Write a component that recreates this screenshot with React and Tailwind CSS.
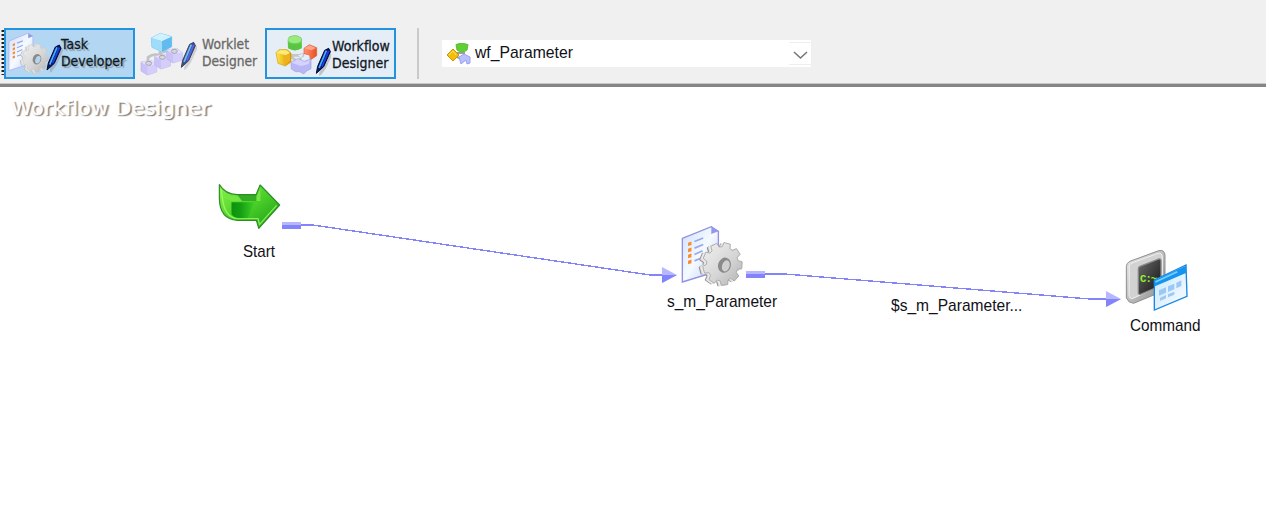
import React from 'react';

const label = 'font-["Liberation_Sans",sans-serif] text-[17px] leading-5 whitespace-nowrap text-[#111118]';
const buttonLabel = 'font-["DejaVu_Sans",sans-serif] text-[14px] leading-[17px] whitespace-nowrap origin-left [font-variant-ligatures:none] [-webkit-text-stroke:0.3px_currentColor]';

function gearPath(cx, cy, rx, ry, teeth) {
  const points = [];
  for (let i = 0; i < teeth; i++) {
    [[-0.38, 0.8], [-0.25, 1], [0.22, 1], [0.35, 0.8]].forEach(([o, r]) => {
      const a = ((i + o) / teeth) * Math.PI * 2 - 0.62;
      points.push(`${(cx + Math.cos(a) * rx * r).toFixed(1)},${(cy + Math.sin(a) * ry * r).toFixed(1)}`);
    });
  }
  return `M${points.join('L')}Z`;
}

function TaskIcon({ className, soft = false }) {
  const id = soft ? 'soft' : 'full';
  return (
    <svg className={className} viewBox="94 15 187 185" preserveAspectRatio="none">
      <defs>
        <linearGradient id={`page-${id}`} x2="1" y2="1">
          <stop stopColor="#cfe0ff" /><stop offset=".5" stopColor="#f4faff" /><stop offset="1" stopColor="#b9c7ff" />
        </linearGradient>
        <linearGradient id={`metal-${id}`} x2="1" y2="1">
          <stop stopColor="#f2f2f2" /><stop offset=".55" stopColor="#d6d6d6" /><stop offset="1" stopColor="#b2b2b2" />
        </linearGradient>
      </defs>
      <path d="M98 55L184 20L205 34V152L98 185Z" fill={`url(#page-${id})`} stroke={soft ? '#b5b5ef' : '#9292df'} strokeWidth="4" />
      <path d="M184 20V42L205 34Z" fill="#9498e8" />
      <path d="M134 64L160 54M134 84L160 73M134 103L158 92M134 122L150 115" stroke="#9ba6ed" strokeWidth="5" />
      <path d="M115 68L125 64V75L115 78ZM115 86L125 82V93L115 96ZM115 104L125 100V111L115 114ZM115 122L125 118V129L115 132Z" fill="#fb8a2b" />
      <g strokeLinejoin="round">
        <path d={gearPath(207, 134, 59, 62, 9)} fill="#b9b9b9" stroke={soft ? '#b8b8b8' : '#949494'} strokeWidth="4" />
        <path d={gearPath(210, 133, 59, 63, 9)} fill="#dedede" stroke="#dedede" strokeWidth="3" />
        <path d={gearPath(213, 132, 59, 63, 9)} fill="#ececec" stroke="#ececec" strokeWidth="3" />
        <path d={gearPath(217, 131, 59, 64, 9)} fill={`url(#metal-${id})`} stroke={soft ? '#c8c8c8' : '#a2a2a2'} strokeWidth="2.5" />
      </g>
      <ellipse cx="223" cy="135" rx="19" ry="23" fill="#8a8a8a" transform="rotate(18 223 135)" />
      <ellipse cx="227" cy="137" rx="11" ry="17" fill={soft ? '#b4d4ef' : '#d0d0d0'} transform="rotate(18 227 137)" />
    </svg>
  );
}

function Pen({ muted = false }) {
  return (
    <g opacity={muted ? 0.75 : 1}>
      <path d="M142 156L145 131L165 84L177 79L183 89L163 133L149 152Z" fill="#777" opacity=".35" transform="translate(5 5)" />
      <path d="M139 153L143 132L164 84L176 78L181 88L161 133Z" fill="#0c1687" stroke="#070729" strokeWidth="3" />
      <path d="M169 85L147 137" stroke="#43b4f3" strokeWidth="5" />
      <path d="M176 86L156 132" stroke="#1840e4" strokeWidth="5" />
      <path d="M139 153L144 136L153 141Z" fill="#071b57" />
    </g>
  );
}

function WorkletIcon() {
  const lower = [[54, 141], [95, 123], [131, 105]];
  return (
    <svg className="h-[50px] w-[62px] shrink-0" viewBox="15 24 186 150">
      <path d="M54 131V112Q72 98 89 107L91 81M94 117V92M99 97Q120 87 131 101" fill="none" stroke="#c0c3c6" strokeWidth="8" />
      {lower.map(([x, y]) => (
        <g key={x} transform={`translate(${x} ${y})`}>
          <path d="M-21 -15L10 -20L26 -7V15L-2 24L-21 12Z" fill="#c9c2f8" stroke="#b9b2ea" strokeWidth="2" />
          <path d="M-21 -15L-2 -3L26 -7L10 -20Z" fill="#e5e0fc" /><path d="M-2 -3V24L26 15V-7Z" fill="#d5cefa" />
          <ellipse cx="2" cy="-11" rx="9" ry="6" fill="#d6d6e1" stroke="#a4a4ae" strokeWidth="3" />
        </g>
      ))}
      <path d="M64 54L91 40L125 50V80L96 95L66 82Z" fill="#83cff6" stroke="#82cff6" strokeWidth="3" />
      <path d="M64 54L91 40L125 50L96 64Z" fill="#d0f1ff" />
      <path d="M64 54L96 64V95L66 82Z" fill="#9edcfa" /><path d="M96 64L125 50V80L96 95Z" fill="#61bbef" />
      <g transform="translate(15 -11)"><Pen muted /></g>
    </svg>
  );
}

function WorkflowIcon() {
  return (
    <svg className="h-[50px] w-[56px]" viewBox="45 28 168 150">
      <defs>
        <linearGradient id="gold" x2="1"><stop stopColor="#ffe84b" /><stop offset="1" stopColor="#d69200" /></linearGradient>
        <linearGradient id="coral" x2="1"><stop stopColor="#ff9271" /><stop offset="1" stopColor="#e95021" /></linearGradient>
      </defs>
      <path d="M83 104H132M84 99L113 125M121 112L119 127" stroke="#c4c7c8" strokeWidth="8" />
      <path d="M112 103L132 98L124 114Z" fill="#e9eded" stroke="#b8bdbf" strokeWidth="2" />
      <path d="M83 58Q84 45 103 44Q122 45 126 56L125 82Q106 96 84 83Z" fill="#65cf50" />
      <ellipse cx="104" cy="57" rx="20" ry="11" fill="#9be981" /><path d="M85 66Q100 77 125 67V83Q105 94 85 83Z" fill="#59c543" />
      <path d="M48 96L57 87H81L93 97V124L76 136L54 128Z" fill="url(#gold)" stroke="#d79e0a" strokeWidth="2" />
      <path d="M51 96L61 89H80L90 97L78 104Z" fill="#ffec77" /><path d="M71 105L90 99V121L73 132Z" fill="#efb11c" />
      <path d="M132 83L148 72L170 81V105L151 118L149 103L132 99Z" fill="url(#coral)" stroke="#db5b34" strokeWidth="2" />
      <path d="M133 83L149 74L168 82L154 89Z" fill="#ffa68b" />
      <path d="M93 125L113 114L133 122L153 115V144L140 151L131 160L119 153L107 153L94 145Z" fill="#b8b6f4" stroke="#a3a2e4" strokeWidth="2" />
      <path d="M94 126L113 115L135 124L151 117L145 131L123 136Z" fill="#d4d2ff" />
      <g transform="translate(30 5)"><Pen /></g>
    </svg>
  );
}

function Toolbar() {
  return (
    <header className="flex h-[87px] items-start border-b-[3px] border-b-[#858585] bg-[#f0f0f0] pt-7 shadow-[inset_0_-1px_0_#c6c6c6]">
      <svg className="h-[50px] w-1 shrink-0" viewBox="0 0 4 50"><path d="M3 2V47" stroke="#222" strokeWidth="3" strokeDasharray="2 2" /></svg>
      <button className="flex h-[51px] w-[131px] shrink-0 items-start border-2 border-[#2493df] bg-[#b3d7f2]">
        <div className="mt-0.5 ml-0.5 h-[44px] w-[40px] shrink-0 overflow-visible"><TaskIcon soft className="h-[42px] w-[42px]" /></div>
        <svg className="mt-[14px] -ml-0.5 h-[30px] w-[18px] shrink-0" viewBox="136 75 54 90"><Pen /></svg>
        <span className={`${buttonLabel} mt-1.5 -ml-[3px] scale-x-[0.89] text-left text-[#101820] [text-shadow:2px_2px_1px_#899bac]`}>Task<br />Developer</span>
      </button>
      <button className="flex h-[51px] w-[130px] shrink-0 items-start">
        <WorkletIcon />
        <span className={`${buttonLabel} mt-2 ml-[5px] scale-x-[0.88] text-left text-[#686868]`}>Worklet<br />Designer</span>
      </button>
      <button className="flex h-[51px] w-[131px] shrink-0 items-start border-2 border-[#2493df] bg-[#e5edf6]">
        <div className="ml-2 shrink-0"><WorkflowIcon /></div>
        <span className={`${buttonLabel} mt-2 ml-px scale-x-[0.9] text-left text-[#111827]`}>Workflow<br />Designer</span>
      </button>
      <div className="ml-[21px] h-[51px] w-0.5 shrink-0 bg-[#cacaca]" />
      <div className="mt-3 ml-[23px] flex h-[27px] w-[369px] shrink-0 items-start bg-white">
        <svg className="mt-[3px] ml-[5px] h-[22px] w-6 shrink-0" viewBox="0 0 24 22">
          <path d="M8 10H18M10 14L17 17" stroke="#9b9f9b" strokeWidth="2" />
          <path d="M9 1.5Q14 -1 21 1.5L20 7Q15 11 10 7Z" fill="#5fcf35" stroke="#5cbf32" />
          <path d="M0 12L6 6L12 12L6 18Z" fill="#f4bd08" stroke="#cc9500" /><path d="M2 12L6 8L9 12" fill="none" stroke="#ffe46a" />
          <path d="M12 14L17 11L23 14V20L20 21L19 17L14 21Z" fill="#b9c0ff" stroke="#98a2ec" />
        </svg>
        <span className={`${label} mt-[3px] ml-1 w-[98px] origin-left scale-x-[0.925]`}>wf_Parameter</span>
        <div className="mt-0.5 ml-auto flex h-[23px] w-[22px] items-center justify-center border-y border-[#eee]">
          <svg className="mt-1 h-[9px] w-[15px]" viewBox="0 0 15 9"><path d="M1 1L7.5 7L14 1" fill="none" stroke="#777" strokeWidth="1.6" /></svg>
        </div>
      </div>
    </header>
  );
}

function StartIcon() {
  return (
    <svg className="h-12 w-[64px]" viewBox="24 26 190 144" preserveAspectRatio="none">
      <defs>
        <linearGradient id="arrow" x2="1" y2="1"><stop stopColor="#8af34a" /><stop offset=".55" stopColor="#46cb28" /><stop offset="1" stopColor="#1a9812" /></linearGradient>
        <linearGradient id="fold"><stop stopColor="#0c920c" /><stop offset=".4" stopColor="#159f14" /><stop offset="1" stopColor="#40d023" /></linearGradient>
      </defs>
      <path d="M28 31Q45 60 81 61H137L149 32L207 92L145 162L138 138H82Q28 134 28 70Z" fill="url(#arrow)" stroke="#2d8d28" strokeWidth="3.5" strokeLinejoin="round" />
      <path d="M34 48Q47 66 73 66H139L150 42V80H64Q47 73 34 65Z" fill="#72e742" />
      <path d="M82 62H138V80H95Z" fill="#259e22" opacity=".8" />
      <path d="M64 84H132L112 134H85Q69 129 64 119Z" fill="url(#fold)" />
      <path d="M33 43L37 70Q43 130 82 133H143L147 151L198 93" fill="none" stroke="#a4ff69" strokeWidth="4" opacity=".75" />
    </svg>
  );
}

function CommandIcon() {
  return (
    <svg className="h-[62px] w-[64px]" viewBox="106 27 192 186">
      <defs>
        <linearGradient id="case" x2="1" y2="1"><stop stopColor="#ececec" /><stop offset=".5" stopColor="#bdbdbd" /><stop offset="1" stopColor="#888" /></linearGradient>
        <linearGradient id="screen" x2="1" y2="1"><stop stopColor="#6c6c6c" /><stop offset="1" stopColor="#111" /></linearGradient>
        <linearGradient id="window" x2="1" y2="1"><stop stopColor="#c7e5ff" /><stop offset="1" stopColor="#fafdff" /></linearGradient>
      </defs>
      <path d="M110 82Q110 68 123 63L207 32Q225 28 226 46V139Q226 151 214 156L132 190L119 186L110 174Z" fill="url(#case)" stroke="#8f8f8f" strokeWidth="3" />
      <path d="M119 76Q122 71 132 67L205 40Q218 38 218 51V134L130 175Q118 178 118 164Z" fill="#d2d2d2" stroke="#f1f1f1" strokeWidth="3" />
      <path d="M146 86Q146 81 151 79L208 57Q214 56 214 63V137L152 163Q146 164 146 158Z" fill="url(#screen)" stroke="#888" strokeWidth="4" />
      <text x="151" y="125" className='fill-[#8ef52b] font-["Liberation_Mono",monospace] text-[32px] font-bold tracking-[-3px]'>C:~</text>
      <path d="M194 120L289 75L292 169L194 210Z" fill="url(#window)" stroke="#1a86df" strokeWidth="4" />
      <path d="M194 121L289 77V99L196 139Z" fill="#1394ef" /><path d="M197 126L263 95" stroke="#79cfff" strokeWidth="5" />
      <path d="M208 151L229 142V158L208 167ZM235 139L254 131V148L235 156ZM260 128L275 121V138L260 145ZM211 173L229 165V175L211 183ZM235 163L254 155V164L235 172Z" fill="#9bc9f7" />
    </svg>
  );
}

function Canvas() {
  return (
    <main className="relative h-[426px] overflow-hidden bg-white">
      <h1 className='absolute top-[7px] left-[11px] origin-left scale-x-[1.06] whitespace-nowrap font-["DejaVu_Sans",sans-serif] text-[20px] leading-7 text-white [font-variant-ligatures:none] [-webkit-text-stroke:0.4px_white] [text-shadow:1px_1px_1px_#777,2px_1px_1px_#aaa]'>Workflow Designer</h1>
      <svg className="absolute inset-0 h-[426px] w-[1266px]" viewBox="0 87 1266 426">
        <g fill="none" stroke="#8383fa" strokeWidth="1.4" shapeRendering="crispEdges">
          <path d="M301 225H313L650 275H662" /><path d="M765 274H785L1090 299H1106" />
        </g>
        <path d="M282 222H301V229H282ZM746 271H765V278H746ZM662 267L677 275L662 283ZM1106 291L1121 299L1106 307Z" fill="#b7b7ff" />
        <path d="M282 225H301V229H282ZM746 274H765V278H746ZM662 275H677L662 283ZM1106 299H1121L1106 307Z" fill="#8383fa" />
      </svg>
      <div className="absolute top-[96px] left-[218px]"><StartIcon /></div>
      <span className={`${label} absolute top-[155px] left-[243px] origin-left scale-x-[0.89]`}>Start</span>
      <div className="absolute top-[138px] left-[681px]"><TaskIcon className="h-[62px] w-[63px]" /></div>
      <span className={`${label} absolute top-[205px] left-[667px] origin-left scale-x-[0.91]`}>s_m_Parameter</span>
      <span className={`${label} absolute top-[209px] left-[891px] origin-left scale-x-[0.915]`}>$s_m_Parameter...</span>
      <div className="absolute top-[162px] left-[1125px]"><CommandIcon /></div>
      <span className={`${label} absolute top-[229px] left-[1130px] origin-left scale-x-[0.9]`}>Command</span>
    </main>
  );
}

export default function App() {
  return <div className="h-[513px] w-[1266px] overflow-hidden bg-white"><Toolbar /><Canvas /></div>;
}
